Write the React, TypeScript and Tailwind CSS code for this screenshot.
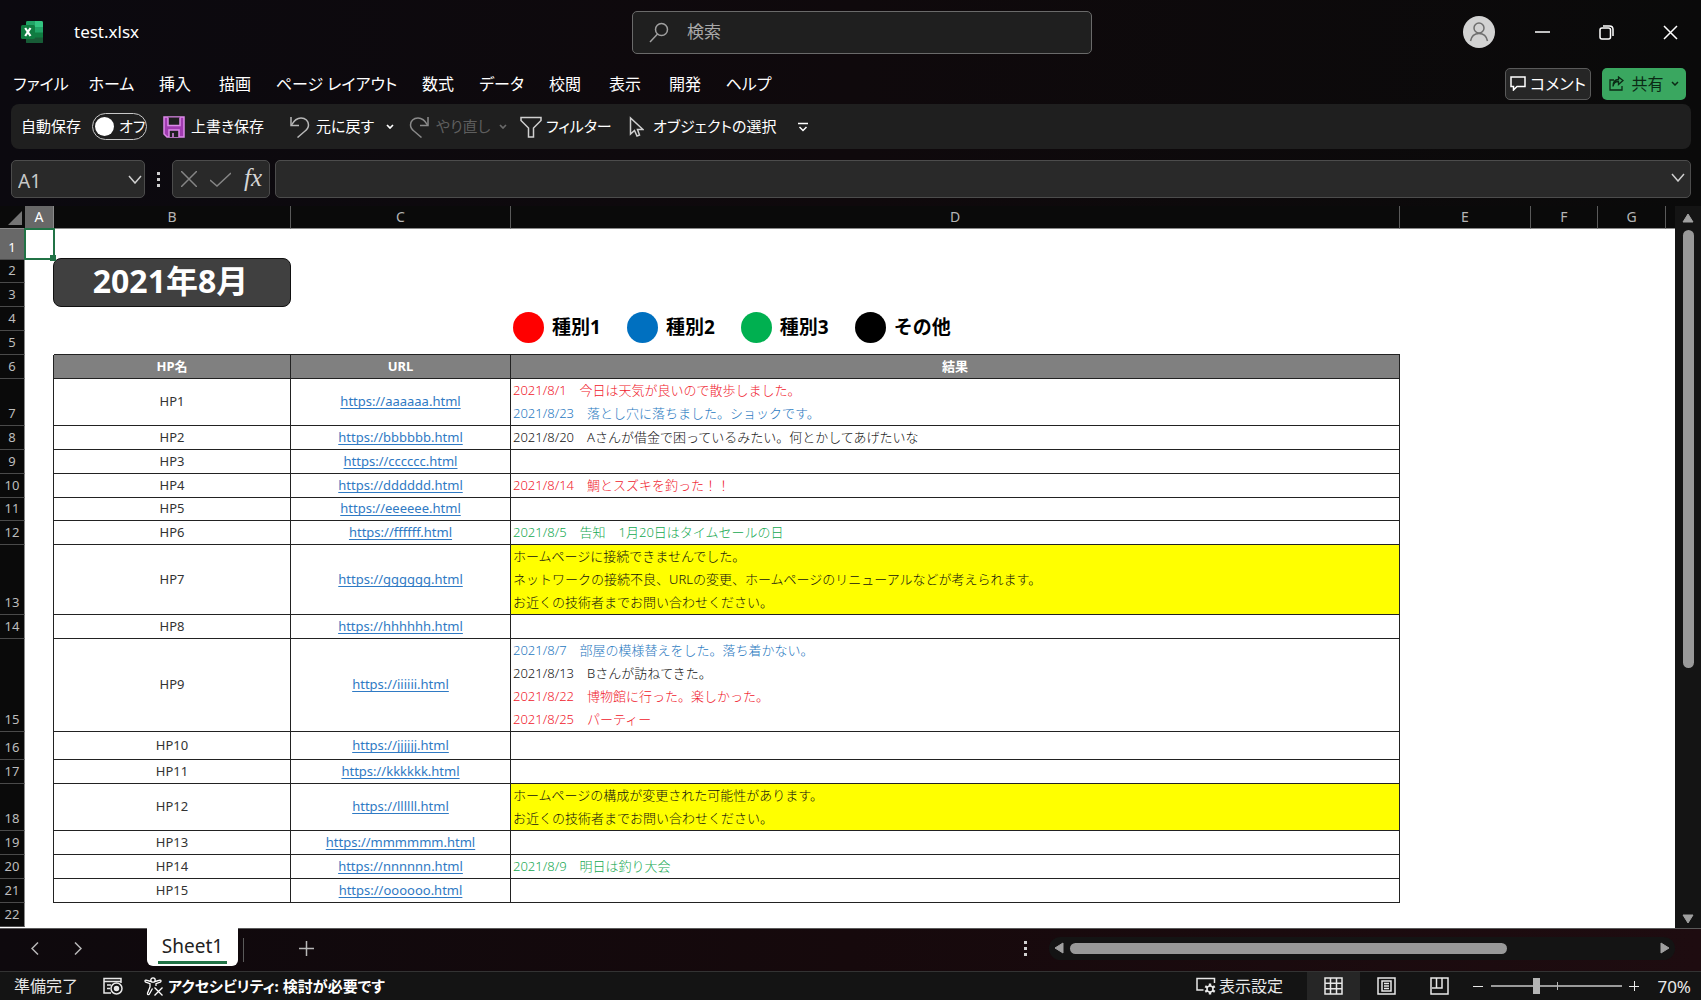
import type { ReactNode } from "react";

type Tone = "red" | "blue" | "green" | "black";
type Line = { text: string; tone: Tone };
type Site = { row: number; height: string; name: string; url: string; warn?: boolean; lines: Line[] };

const toneClass: Record<Tone, string> = {
  red: "text-[#f0202c]",
  blue: "text-[#1f78c0]",
  green: "text-[#14a850]",
  black: "text-[#111111]",
};

const line = (tone: Tone, text: string): Line => ({ tone, text });

const sites: Site[] = [
  {
    row: 7, height: "h-[47px]", name: "HP1", url: "https://aaaaaa.html",
    lines: [
      line("red", "2021/8/1　今日は天気が良いので散歩しました。"),
      line("blue", "2021/8/23　落とし穴に落ちました。ショックです。"),
    ],
  },
  { row: 8, height: "h-6", name: "HP2", url: "https://bbbbbb.html", lines: [line("black", "2021/8/20　Aさんが借金で困っているみたい。何とかしてあげたいな")] },
  { row: 9, height: "h-6", name: "HP3", url: "https://cccccc.html", lines: [] },
  { row: 10, height: "h-6", name: "HP4", url: "https://dddddd.html", lines: [line("red", "2021/8/14　鯛とスズキを釣った！！")] },
  { row: 11, height: "h-[23px]", name: "HP5", url: "https://eeeeee.html", lines: [] },
  { row: 12, height: "h-6", name: "HP6", url: "https://ffffff.html", lines: [line("green", "2021/8/5　告知　1月20日はタイムセールの日")] },
  {
    row: 13, height: "h-[70px]", name: "HP7", url: "https://gggggg.html", warn: true,
    lines: [
      line("black", "ホームページに接続できませんでした。"),
      line("black", "ネットワークの接続不良、URLの変更、ホームページのリニューアルなどが考えられます。"),
      line("black", "お近くの技術者までお問い合わせください。"),
    ],
  },
  { row: 14, height: "h-6", name: "HP8", url: "https://hhhhhh.html", lines: [] },
  {
    row: 15, height: "h-[93px]", name: "HP9", url: "https://iiiiii.html",
    lines: [
      line("blue", "2021/8/7　部屋の模様替えをした。落ち着かない。"),
      line("black", "2021/8/13　Bさんが訪ねてきた。"),
      line("red", "2021/8/22　博物館に行った。楽しかった。"),
      line("red", "2021/8/25　パーティー"),
    ],
  },
  { row: 16, height: "h-7", name: "HP10", url: "https://jjjjjj.html", lines: [] },
  { row: 17, height: "h-6", name: "HP11", url: "https://kkkkkk.html", lines: [] },
  {
    row: 18, height: "h-[47px]", name: "HP12", url: "https://llllll.html", warn: true,
    lines: [
      line("black", "ホームページの構成が変更された可能性があります。"),
      line("black", "お近くの技術者までお問い合わせください。"),
    ],
  },
  { row: 19, height: "h-6", name: "HP13", url: "https://mmmmmm.html", lines: [] },
  { row: 20, height: "h-6", name: "HP14", url: "https://nnnnnn.html", lines: [line("green", "2021/8/9　明日は釣り大会")] },
  { row: 21, height: "h-6", name: "HP15", url: "https://oooooo.html", lines: [] },
];

const legend = [
  { label: "種別1", dot: "bg-[#ff0000]" },
  { label: "種別2", dot: "bg-[#0070c0]" },
  { label: "種別3", dot: "bg-[#00b050]" },
  { label: "その他", dot: "bg-black" },
];

const tabs = [
  { label: "ファイル", width: "w-[74px]" },
  { label: "ホーム", width: "w-[67px]" },
  { label: "挿入", width: "w-[60px]" },
  { label: "描画", width: "w-[60px]" },
  { label: "ページ レイアウト", width: "w-[143px]" },
  { label: "数式", width: "w-[60px]" },
  { label: "データ", width: "w-[67px]" },
  { label: "校閲", width: "w-[60px]" },
  { label: "表示", width: "w-[60px]" },
  { label: "開発", width: "w-[60px]" },
  { label: "ヘルプ", width: "w-[67px]" },
];

function Svg({ w, h, sw = 1.5, className = "", children }: { w: number; h: number; sw?: number; className?: string; children: ReactNode }) {
  return (
    <svg width={w} height={h} viewBox={`0 0 ${w} ${h}`} fill="none" stroke="currentColor" strokeWidth={sw} className={`shrink-0 ${className}`} aria-hidden="true">
      {children}
    </svg>
  );
}

function Chevron({ w = 8, h = 5, sw = 1.5, className = "" }: { w?: number; h?: number; sw?: number; className?: string }) {
  return (
    <Svg w={w} h={h} sw={sw} className={className}>
      <path d={`M1 1 L${w / 2} ${h - 1} L${w - 1} 1`} />
    </Svg>
  );
}

function ExcelLogo() {
  return (
    <svg width="22" height="22" viewBox="0 0 22 22" className="shrink-0" aria-label="Excel">
      <rect x="5" y="0" width="17" height="22" rx="1.5" fill="#107c41" />
      <path d="M5 1.500Q5 0 6.500 0H14V6H5Z" fill="#21a366" />
      <path d="M14 0H20.500Q22 0 22 1.500V6H14Z" fill="#33c481" />
      <rect x="14" y="6" width="8" height="5.500" fill="#21a366" />
      <path d="M5 16.500H22V20.500Q22 22 20.500 22H6.500Q5 22 5 20.500Z" fill="#185c37" />
      <rect x="0" y="4" width="14" height="14" rx="1.500" fill="#107c41" />
      <path d="M4.200 7L9.500 15M9.500 7L4.200 15" stroke="#fff" strokeWidth="2.200" />
    </svg>
  );
}

function TitleBar() {
  return (
    <header className="grid h-16 shrink-0 grid-cols-[632fr_460px_609fr] items-center">
      <div className="flex items-center gap-[31px] pl-[21px]">
        <ExcelLogo />
        <h1 className="text-[17px] text-white">test.xlsx</h1>
      </div>
      <label className="flex h-[43px] items-center gap-[18px] rounded-[5px] border border-[#6a6a6a] bg-[#1f1f1f] pl-4 text-[#a8a8a8]">
        <Svg w={20} h={21} className="text-[#a0a0a0]">
          <circle cx="12.500" cy="7.500" r="6" />
          <path d="M8.500 12L1 20" />
        </Svg>
        <input type="text" placeholder="検索" aria-label="検索" className="w-full bg-transparent text-[17px] outline-none placeholder:text-[#a8a8a8]" />
      </label>
      <div className="flex items-center justify-end pr-[23px] text-white">
        <button aria-label="アカウント" className="mr-10 flex size-8 items-center justify-center rounded-full bg-[#d2d2d2] text-[#6e6e6e]">
          <Svg w={20} h={20}>
            <circle cx="10" cy="6" r="5" />
            <path d="M1.500 19C2.500 14 5.500 11.500 10 11.500S17.500 14 18.500 19" />
          </Svg>
        </button>
        <button aria-label="最小化" className="mr-[49px] flex h-8 items-center">
          <Svg w={15} h={15}><path d="M0 7H15" /></Svg>
        </button>
        <button aria-label="元に戻す (縮小)" className="mr-[49px] flex h-8 items-center">
          <Svg w={15} h={15}>
            <rect x="1" y="3" width="10.500" height="11" rx="2" />
            <path d="M4 1H10.500Q14 1 14 4.500V11" />
          </Svg>
        </button>
        <button aria-label="閉じる" className="flex h-8 items-center">
          <Svg w={15} h={15}><path d="M1 1L14 14M14 1L1 14" /></Svg>
        </button>
      </div>
    </header>
  );
}

function MenuBar() {
  return (
    <div className="flex h-10 shrink-0 items-center justify-between pr-[15px] pb-px pl-1">
      <nav className="flex pt-px text-white">
        {tabs.map((t) => (
          <button key={t.label} className={`${t.width} text-center text-[16px] whitespace-nowrap`}>{t.label}</button>
        ))}
      </nav>
      <div className="flex gap-[11px] text-[16px] leading-none">
        <button className="flex h-8 w-[86px] items-center justify-center gap-1 rounded-[5px] border border-[#5a5a5a] bg-[#262626] whitespace-nowrap text-white">
          <Svg w={16} h={15}><path d="M1 1H15V10.500H7L3.500 14V10.500H1Z" /></Svg>
          コメント
        </button>
        <button className="flex h-8 w-[84px] items-center justify-center gap-[7px] rounded-[5px] bg-[#3aa760] text-[#0b2a15]">
          <Svg w={15} h={15} sw={1.3}>
            <path d="M5 4H1V14H13V10" />
            <path d="M4 10.500C4.500 7 6.500 5.500 9.500 5.500V8.500L14 4.500L9.500 1V3.500C6 3.500 4 6 4 10.500Z" />
          </Svg>
          <span className="whitespace-nowrap">共有</span>
          <Chevron />
        </button>
      </div>
    </div>
  );
}

function QuickAccess() {
  return (
    <div className="mr-[10px] ml-[11px] flex h-[45px] shrink-0 items-center rounded-lg bg-[#1f1f1f] pl-[10px] text-[15px] leading-none whitespace-nowrap text-white">
      <span className="w-[71px]" id="autosave">自動保存</span>
      <button role="switch" aria-checked="false" aria-labelledby="autosave" className="mr-4 flex h-[27px] w-[55px] items-center gap-[5px] rounded-full border border-[#c8c8c8] pl-[2px]">
        <span className="size-[19px] shrink-0 rounded-full bg-white" />
        オフ
      </button>
      <button className="flex w-[126px] items-center gap-[6px]">
        <Svg w={22} h={22} sw={1.500}>
          <path d="M1 1H21V21H4L1 18Z" fill="#a03bb0" stroke="#dc8ae8" />
          <path d="M5 1.500V9.500H17V1.500" fill="#1f1f1f" stroke="#dc8ae8" />
          <path d="M6 21V14H16V21M10 21V17" fill="#1f1f1f" stroke="#dc8ae8" />
        </Svg>
        上書き保存
      </button>
      <button className="flex w-[94px] items-center gap-[6px]">
        <Svg w={21} h={22} className="text-[#b8b8b8]">
          <path d="M2 1V9.500H10" />
          <path d="M2.500 9C5 4.500 8 2 12 2C16.500 2 19.500 5 19.500 9C19.500 12 17.500 14 15.500 15.500L8.500 21.500" />
        </Svg>
        元に戻す
      </button>
      <button aria-label="元に戻すの履歴" className="flex w-[26px] items-center pl-[3px]"><Chevron sw={1.700} /></button>
      <button disabled className="flex w-[88px] items-center gap-[6px] text-[#5e5e5e]">
        <Svg w={21} h={22} className="text-[#8a8a8a]">
          <path d="M19 1V9.500H11" />
          <path d="M18.500 9C16 4.500 13 2 9 2C4.500 2 1.500 5 1.500 9C1.500 12 3.500 14 5.500 15.500L12.500 21.500" />
        </Svg>
        やり直し
      </button>
      <button disabled aria-label="やり直しの履歴" className="flex w-[23px] items-center pl-[2px] text-[#6a6a6a]"><Chevron sw={1.700} /></button>
      <button className="flex w-[109px] items-center gap-1">
        <Svg w={22} h={22} className="text-[#d0d0d0]"><path d="M1 1.500H21V4.500L13.500 12V21H8.500V12L1 4.500Z" /></Svg>
        フィルター
      </button>
      <button className="flex w-[169px] items-center gap-[9px]">
        <Svg w={15} h={21} className="text-[#d0d0d0]"><path d="M1.500 2V18L5.500 14.500L8 20L10.500 19L8.500 13.500H14Z" /></Svg>
        オブジェクトの選択
      </button>
      <button aria-label="クイック アクセス ツール バーのユーザー設定">
        <Svg w={10} h={10}><path d="M0 1.500H10M1.500 5L5 8.500L8.500 5" /></Svg>
      </button>
    </div>
  );
}

function Dots({ className = "" }: { className?: string }) {
  return (
    <svg width="3" height="15" viewBox="0 0 3 15" fill="#d0d0d0" className={`shrink-0 ${className}`} aria-hidden="true">
      <path d="M0 0H3V3H0ZM0 6H3V9H0ZM0 12H3V15H0Z" />
    </svg>
  );
}

function FormulaBar() {
  return (
    <div className="mt-[11px] mb-2 flex h-[38px] shrink-0 items-stretch pr-[10px] pl-[11px]">
      <div className="flex w-[134px] items-center rounded-[5px] border border-[#4c4c4c] bg-[#292929] pr-[2px] pl-[6px]">
        <input type="text" aria-label="名前ボックス" defaultValue="A1" className="w-full min-w-0 bg-transparent pt-1 text-[19px] text-[#c8c8c8] outline-none" />
        <button aria-label="名前の一覧"><Chevron w={14} h={9} className="text-[#cfcfcf]" /></button>
      </div>
      <Dots className="mx-3 self-center" />
      <div className="flex w-[98px] items-center gap-[13px] rounded-[5px] border border-[#4c4c4c] bg-[#292929] pl-2 text-[#858585]">
        <button aria-label="キャンセル"><Svg w={16} h={16}><path d="M0 0L16 16M16 0L0 16" /></Svg></button>
        <button aria-label="入力"><Svg w={21} h={15}><path d="M0 8L7 14L21 1" /></Svg></button>
        <button aria-label="関数の挿入" className="pb-1 font-['Liberation_Serif',serif] text-[25px] leading-none text-[#d5d5d5] italic">fx</button>
      </div>
      <div className="ml-[5px] flex flex-1 items-center rounded-[5px] border border-[#4c4c4c] bg-[#292929] pr-[5px]">
        <input type="text" aria-label="数式バー" className="w-full bg-transparent px-2 text-base text-white outline-none" />
        <button aria-label="数式バーの展開" className="pb-1"><Chevron w={14} h={9} className="text-[#cfcfcf]" /></button>
      </div>
    </div>
  );
}

function RowHead({ n, height, selected = false }: { n: number; height: string; selected?: boolean }) {
  return (
    <th
      scope="row"
      className={`${height} border-r border-b border-r-[#8a8a8a] border-b-[#4a4a4a] pb-[2px] align-bottom text-[13px] leading-5 font-normal ${selected ? "bg-[#686868] text-white" : "bg-[#0a0a0a] text-[#bdbdbd]"}`}
    >
      {n}
    </th>
  );
}

const cellBorder = "border-r border-b border-[#222222]";

function Sheet() {
  return (
    <table className="w-full table-fixed border-separate border-spacing-0 text-[13px] leading-5">
      <colgroup>
        <col className="w-[25px]" />
        <col className="w-[29px]" />
        <col className="w-[237px]" />
        <col className="w-[220px]" />
        <col />
        <col className="w-[131px]" />
        <col className="w-[67px]" />
        <col className="w-[68px]" />
        <col className="w-[9px]" />
      </colgroup>
      <thead>
        <tr className="h-[23px] bg-[#0a0a0a] text-[14px] leading-5 text-[#b5b5b5]">
          <th className="border-b border-[#8a8a8a] pr-[3px] pb-[3px] align-bottom" aria-label="すべて選択">
            <svg width="14" height="14" viewBox="0 0 14 14" className="ml-auto block" aria-hidden="true"><path d="M14 0V14H0Z" fill="#757575" /></svg>
          </th>
          <th scope="col" className="border-r border-b border-[#8a8a8a] bg-[#686868] font-normal text-white">A</th>
          {["B", "C", "D", "E", "F", "G"].map((c) => (
            <th key={c} scope="col" className="border-r border-b border-r-[#5a5a5a] border-b-[#8a8a8a] font-normal">{c}</th>
          ))}
          <th className="border-b border-[#8a8a8a]" aria-label="H" />
        </tr>
      </thead>
      <tbody>
        <tr>
          <RowHead n={1} height="h-[31px]" selected />
          <td className="relative">
            <div className="absolute -top-px -left-px z-20 h-8 w-[31px] border-2 border-[#217346]">
              <span className="absolute -right-[3px] -bottom-[3px] size-[6px] bg-[#217346]" />
            </div>
          </td>
          <td colSpan={7} />
        </tr>
        <tr>
          <RowHead n={2} height="h-[23px]" />
          <td />
          <td className="relative">
            <div className="absolute -top-[2px] -left-px z-10 flex h-[49px] w-[238px] items-center justify-center rounded-[8px] border border-[#111111] bg-[#404040] pr-[3px] pb-1 text-[32px] leading-none font-bold whitespace-nowrap text-white">
              2021年8月
            </div>
          </td>
          <td colSpan={6} />
        </tr>
        <tr>
          <RowHead n={3} height="h-6" />
          <td colSpan={8} />
        </tr>
        <tr>
          <RowHead n={4} height="h-6" />
          <td colSpan={3} />
          <td className="relative">
            <ul className="absolute top-[5px] left-[2px] flex gap-[26px]">
              {legend.map((l) => (
                <li key={l.label} className="flex items-center gap-2 text-[19px] leading-[31px] font-bold whitespace-nowrap text-black">
                  <span className={`size-[31px] rounded-full ${l.dot}`} />
                  {l.label}
                </li>
              ))}
            </ul>
          </td>
          <td colSpan={4} />
        </tr>
        <tr>
          <RowHead n={5} height="h-6" />
          <td />
          <td className="border-b border-[#222222]" />
          <td className="border-b border-[#222222]" />
          <td className="border-b border-[#222222]" />
          <td colSpan={4} />
        </tr>
        <tr className="text-white">
          <RowHead n={6} height="h-6" />
          <td className="border-r border-[#222222]" />
          <th scope="col" className={`${cellBorder} bg-[#808080] pb-[2px]`}>HP名</th>
          <th scope="col" className={`${cellBorder} bg-[#808080] pb-[2px]`}>URL</th>
          <th scope="col" className={`${cellBorder} bg-[#808080] pb-[2px]`}>結果</th>
          <td colSpan={4} />
        </tr>
        {sites.map((s) => (
          <tr key={s.row}>
            <RowHead n={s.row} height={s.height} />
            <td className="border-r border-[#222222]" />
            <td className={`${cellBorder} pb-[2px] text-center text-[#333333]`}>{s.name}</td>
            <td className={`${cellBorder} pb-[2px] text-center`}>
              <a href={s.url} className="text-[#2f7ac4] underline underline-offset-2 [text-decoration-skip-ink:none]">{s.url}</a>
            </td>
            <td className={`${cellBorder} pl-[2px] font-light whitespace-nowrap ${s.warn ? "bg-[#ffff00]" : ""}`}>
              {s.lines.map((l) => (
                <div key={l.text} className={`h-[23px] leading-[23px] ${toneClass[l.tone]}`}>{l.text}</div>
              ))}
            </td>
            <td colSpan={4} />
          </tr>
        ))}
        <tr>
          <RowHead n={22} height="h-6" />
          <td colSpan={8} />
        </tr>
      </tbody>
    </table>
  );
}

function VerticalScroll() {
  return (
    <div className="flex w-[26px] shrink-0 flex-col items-center bg-[#141414] pt-[7px] pb-1">
      <svg width="12" height="10" viewBox="0 0 12 10" aria-hidden="true"><path d="M6 1L11 9H1Z" fill="#a0a0a0" stroke="#a0a0a0" strokeLinejoin="round" /></svg>
      <div className="mt-[7px] flex w-[11px] flex-1 flex-col">
        <div className="h-[64%] rounded-full bg-[#999999]" />
      </div>
      <svg width="12" height="10" viewBox="0 0 12 10" aria-hidden="true"><path d="M6 9L11 1H1Z" fill="#a0a0a0" stroke="#a0a0a0" strokeLinejoin="round" /></svg>
    </div>
  );
}

function SheetTabs() {
  return (
    <div className="flex h-[43px] shrink-0 items-start border-t border-[#5a5a5a] bg-linear-to-r from-[#0e090d] via-[#16090c] to-[#1e0c10] text-[#b8b8b8]">
      <div className="flex h-[38px] w-[147px] items-center gap-[35px] pl-[31px]">
        <button aria-label="前のシート"><Svg w={8} h={13}><path d="M7 0.500L1 6.500L7 12.500" /></Svg></button>
        <button aria-label="次のシート"><Svg w={8} h={13}><path d="M1 0.500L7 6.500L1 12.500" /></Svg></button>
      </div>
      <button className="-mt-px h-[38px] w-[91px] rounded-b-[6px] bg-white px-[11px] text-[#222222]">
        <span className="block h-[34px] border-b-[3px] border-[#217346] text-[19px] leading-8">Sheet1</span>
      </button>
      <span className="mt-[9px] ml-[5px] h-6 w-px bg-[#5a5a5a]" />
      <button aria-label="新しいシート" className="ml-[55px] flex h-[38px] items-center">
        <Svg w={15} h={15}><path d="M7.500 0V15M0 7.500H15" /></Svg>
      </button>
      <div className="ml-auto flex h-[38px] items-center">
        <Dots className="mr-[22px]" />
        <div className="mr-[26px] flex h-[23px] w-[626px] items-center rounded-full bg-[#141414] px-[5px]">
          <svg width="10" height="12" viewBox="0 0 10 12" aria-hidden="true"><path d="M1 6L9 1V11Z" fill="#a0a0a0" stroke="#a0a0a0" strokeLinejoin="round" /></svg>
          <div className="mr-[7px] ml-[6px] flex flex-1">
            <div className="h-[11px] w-3/4 rounded-full bg-[#999999]" />
          </div>
          <svg width="10" height="12" viewBox="0 0 10 12" aria-hidden="true"><path d="M9 6L1 1V11Z" fill="#a0a0a0" stroke="#a0a0a0" strokeLinejoin="round" /></svg>
        </div>
      </div>
    </div>
  );
}

function StatusBar() {
  return (
    <footer className="flex h-[29px] shrink-0 items-center border-t border-[#333333] bg-[#141414] pl-[14px] text-[16px] leading-none whitespace-nowrap text-[#e8e8e8]">
      <span className="w-[89px]">準備完了</span>
      <button aria-label="マクロの記録" className="mr-[21px]">
        <Svg w={20} h={18}>
          <path d="M8 16H1V1.500H18V6M1 4.500H18M4 8H8M4 11.500H7" />
          <circle cx="13.500" cy="11.500" r="5.500" />
          <circle cx="13.500" cy="11.500" r="2" fill="currentColor" />
        </Svg>
      </button>
      <button className="flex items-center gap-1 text-[15px] font-bold text-white">
        <Svg w={20} h={19} sw={1.300}>
          <circle cx="9" cy="3" r="2.200" />
          <path d="M7 4.500L2 3.200C0.800 3 0.600 4.700 1.700 5.100L6 6.700V10L3.500 16.300C3.200 17.700 4.800 18.200 5.400 17L8.500 11.500" />
          <path d="M11 4.500L16 3.200C17.200 3 17.400 4.700 16.300 5.100L12 6.700V9" />
          <path d="M10.500 10.500L18.500 18.500M18.500 10.500L10.500 18.500" />
        </Svg>
        アクセシビリティ: 検討が必要です
      </button>
      <div className="ml-auto flex h-full items-center">
        <button className="mr-[24px] flex items-center gap-[3px]">
          <Svg w={20} h={18}>
            <path d="M7.500 13H1V1.500H18.500V6" />
            <circle cx="14" cy="12" r="3" />
            <path d="M14 6.500V9M14 15V17.500M9.200 9.200L11.400 10.500M16.600 13.500L18.800 14.800M18.800 9.200L16.600 10.500M11.400 13.500L9.200 14.800" strokeWidth="2.400" />
          </Svg>
          表示設定
        </button>
        <button aria-label="標準" className="flex h-full w-[53px] items-center justify-center bg-[#262626]">
          <Svg w={19} h={18}><path d="M1 1H18V17H1ZM6.500 1V17M12.500 1V17M1 6.300H18M1 11.700H18" /></Svg>
        </button>
        <button aria-label="ページ レイアウト表示" className="flex w-[53px] items-center justify-center">
          <Svg w={19} h={18}><path d="M1 1H18V17H1ZM5 4H14V14H5ZM7 6.500H12M7 9H12M7 11.500H12" /></Svg>
        </button>
        <button aria-label="改ページ プレビュー" className="flex w-[53px] items-center justify-center">
          <Svg w={19} h={18}><path d="M1 1H18V17H1ZM2 11H12V1M6.500 1V11" /></Svg>
        </button>
        <button aria-label="縮小" className="mr-2 ml-[7px]"><Svg w={10} h={10} sw={1}><path d="M0 5.500H10" /></Svg></button>
        <div className="relative flex w-[131px] items-center">
          <input
            type="range"
            aria-label="ズーム"
            min={0}
            max={100}
            defaultValue={34}
            className="h-4 w-full appearance-none bg-transparent [&::-webkit-slider-runnable-track]:h-[2px] [&::-webkit-slider-runnable-track]:bg-[#9a9a9a] [&::-webkit-slider-thumb]:-mt-[7px] [&::-webkit-slider-thumb]:h-4 [&::-webkit-slider-thumb]:w-[7px] [&::-webkit-slider-thumb]:appearance-none [&::-webkit-slider-thumb]:bg-[#b5b5b5]"
          />
          <span className="pointer-events-none absolute top-1 left-1/2 h-2 w-px bg-[#b5b5b5]" />
        </div>
        <button aria-label="拡大" className="ml-[7px]"><Svg w={10} h={10} sw={1}><path d="M0 5.500H10M5.500 0V10" /></Svg></button>
        <button className="w-[62px] pr-[10px] text-right text-[17px]">70%</button>
      </div>
    </footer>
  );
}

export default function App() {
  return (
    <div className="flex h-screen flex-col overflow-hidden bg-linear-to-r from-[#0b090f] via-[#0f090c] to-[#0a0a0a] font-['Noto_Sans','Noto_Sans_CJK_JP',sans-serif]">
      <div className="flex shrink-0 flex-col [font-feature-settings:'palt']">
        <TitleBar />
        <MenuBar />
        <QuickAccess />
        <FormulaBar />
      </div>
      <main className="flex min-h-0 flex-1">
        <div className="min-w-0 flex-1 overflow-hidden bg-white">
          <Sheet />
        </div>
        <VerticalScroll />
      </main>
      <div className="shrink-0 [font-feature-settings:'palt']">
        <SheetTabs />
        <StatusBar />
      </div>
    </div>
  );
}
